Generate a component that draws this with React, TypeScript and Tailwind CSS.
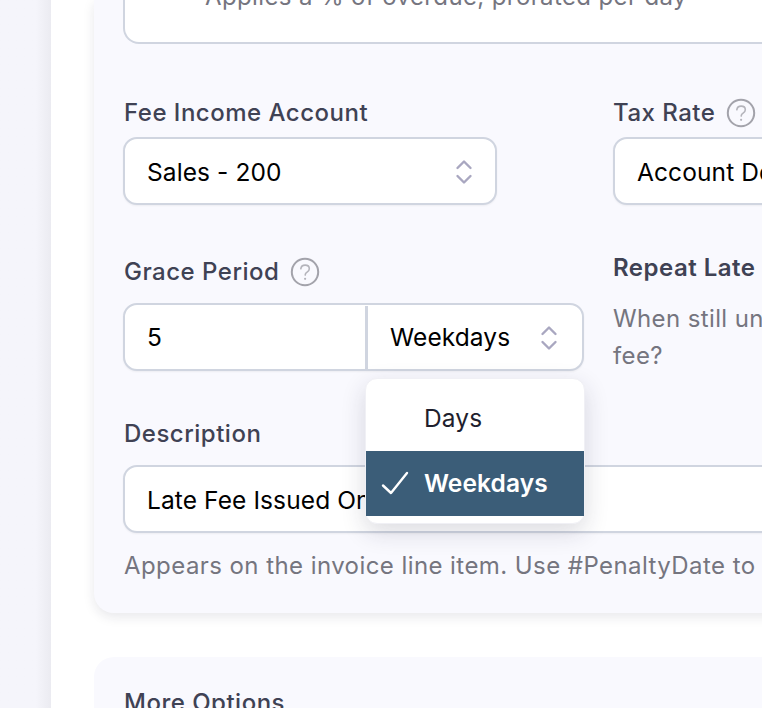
import React from "react";

function Help() {
  return (
    <svg width="30" height="30" viewBox="0 0 30 30" fill="none" className="shrink-0">
      <circle cx="15" cy="15" r="13.2" stroke="#a3a3ab" strokeWidth="2" />
      <path d="M10.8 11.8c.3-2.3 2-3.7 4.3-3.7 2.4 0 4.2 1.5 4.2 3.6 0 1.6-.8 2.5-2.2 3.4-1.3.8-1.9 1.5-1.9 3" stroke="#b4b4bb" strokeWidth="1.6" strokeLinecap="round" />
      <circle cx="15.1" cy="21.8" r="1.1" fill="#b4b4bb" />
    </svg>
  );
}

function Chevrons() {
  return (
    <svg width="18" height="28" viewBox="0 0 18 28" fill="none" className="shrink-0">
      <path d="M2.5 10 9 3.5 15.5 10M2.5 18 9 24.5 15.5 18" stroke="#a9a7c0" strokeWidth="2.4" strokeLinecap="round" strokeLinejoin="round" />
    </svg>
  );
}

const box = "bg-white border-2 border-[#d0d5e0] rounded-[14px] h-[68px] flex items-center shadow-[0_1px_2px_rgba(0,0,0,0.05)] text-[24.5px] tracking-[0.1px]";
const label = "text-[24px] leading-[32px] font-medium text-[#3f4254] tracking-[0.5px]";
const muted = "text-[24px] text-[#75757f]";

export default function App() {
  return (
    <div className="w-[762px] h-[708px] overflow-hidden flex text-black [font-family:Inter,sans-serif]">
      <div className="w-[51px] shrink-0 bg-gradient-to-r from-[#f5f5fb] from-70% to-[#ebebf1]" />
      <div className="flex-1 bg-white pl-[43px] min-w-0">
        <div className="w-[900px]">
          <div className="h-[613px] bg-[#f9f9fe] rounded-b-[20px] px-[29px] shadow-[0_4px_12px_rgba(30,30,60,0.10)]">
            <div className="h-[44px] bg-white border-2 border-t-0 border-[#d0d5e0] rounded-b-[16px] overflow-hidden pl-[80px]">
              <p className={muted + " tracking-[0.38px] leading-[32px] -mt-[19px] whitespace-nowrap"}>Applies a % of overdue, prorated per day</p>
            </div>

            <div className="flex gap-[29px] mt-[53px]">
              <div className="w-[461px] shrink-0">
                <div className={label + " pl-px"}>Fee Income Account</div>
                <div className={box + " pt-[2px] w-[374px] mt-[8px] pl-[22px] pr-[22px] justify-between"}>
                  <span>Sales - 200</span>
                  <Chevrons />
                </div>
              </div>
              <div className="flex-1">
                <div className="flex items-center gap-[11px] h-[32px]">
                  <span className={label}>Tax Rate</span>
                  <Help />
                </div>
                <div className={box + " pt-[2px] mt-[8px] pl-[22px]"}>Account Default</div>
              </div>
            </div>

            <div className="flex gap-[29px] mt-[51px]">
              <div className="w-[461px] shrink-0">
                <div className="flex items-center gap-[11px] h-[32px]">
                  <span className={label + " pl-px"}>Grace Period</span>
                  <Help />
                </div>
                <div className={box + " pt-px mt-[15px] relative"}>
                  <div className="w-[243px] pl-[22px] h-full flex items-center border-r-[3px] border-[#d0d5e0]">5</div>
                  <div className="flex-1 pl-[22px] pr-[24px] flex items-center justify-between">
                    <span>Weekdays</span>
                    <Chevrons />
                  </div>
                  <div className="absolute z-10 left-[240px] top-[73px] w-[220px] h-[146px] bg-white rounded-[12px] pt-[7px] border border-[#f0f0f5] shadow-[0_8px_24px_rgba(30,30,60,0.16)]">
                    <div className="h-[65px] pl-[58px] flex items-center text-[#1f1f2e]">Days</div>
                    <div className="h-[65px] bg-[#3b5d78] text-white font-semibold pl-[58px] flex items-center relative">
                      <svg width="28" height="24" viewBox="0 0 28 24" fill="none" className="absolute left-[15px] top-[20px]">
                        <path d="M2 14.5 10 22 26 2" stroke="white" strokeWidth="2.4" strokeLinecap="round" strokeLinejoin="round" />
                      </svg>
                      Weekdays
                    </div>
                  </div>
                </div>
              </div>
              <div className="flex-1">
                <div className={label + " font-semibold -mt-[4px]"}>Repeat Late Fee</div>
                <p className={muted + " tracking-[0.38px] leading-[37px] mt-[16px] whitespace-nowrap"}>When still unpaid, add another late<br />fee?</p>
              </div>
            </div>

            <div className={label + " pl-px mt-[44px]"}>Description</div>
            <div className={box + " pt-[2px] mt-[15px] pl-[22px]"}>Late Fee Issued On #PenaltyDate</div>
            <p className={muted + " tracking-[0.43px] leading-[32px] mt-[17px] pl-px whitespace-nowrap"}>Appears on the invoice line item. Use #PenaltyDate to insert the date</p>
          </div>

          <div className="mt-[44px] bg-[#f9f9fe] rounded-t-[20px] px-[29px] pt-[30px] h-[100px]">
            <div className={label + " pl-px"}>More Options</div>
          </div>
        </div>
      </div>
    </div>
  );
}
